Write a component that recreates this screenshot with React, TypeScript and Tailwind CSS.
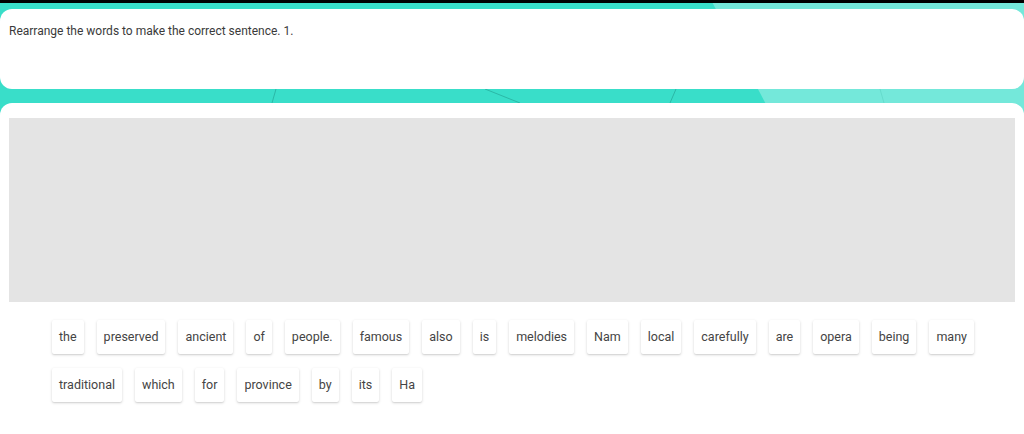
import React from 'react';

const row1 = ['the', 'preserved', 'ancient', 'of', 'people.', 'famous', 'also', 'is', 'melodies', 'Nam', 'local', 'carefully', 'are', 'opera', 'being', 'many'];
const row2 = ['traditional', 'which', 'for', 'province', 'by', 'its', 'Ha'];

const WordChip: React.FC<{ word: string }> = ({ word }) => (
  <div className="h-[34px] px-[7px] flex items-center bg-white rounded-[2px] text-[12.5px] text-[#444] shadow-[0_1px_3px_rgba(0,0,0,0.16),0_1px_1px_rgba(0,0,0,0.06)]">
    {word}
  </div>
);

export default function App() {
  return (
    <div
      className="relative w-[1024px] h-[434px] overflow-hidden bg-[#39dec9]"
      style={{ fontFamily: 'Roboto, "Liberation Sans", sans-serif' }}
    >
      {/* background decoration */}
      <svg className="absolute inset-0" width="1024" height="434" viewBox="0 0 1024 434">
        <polygon points="711,0 1024,0 1024,434 940,434" fill="#74e8da" />
        <path d="M485 89 L520 103" stroke="#2bb8a7" strokeWidth="1" fill="none" />
        <path d="M676 89 L670 103" stroke="#2bb8a7" strokeWidth="1" fill="none" />
        <path d="M276 89 L272 103" stroke="#2bb8a7" strokeWidth="1" fill="none" />
        <path d="M880 89 L884 103" stroke="#66dccd" strokeWidth="1" fill="none" />
      </svg>
      <div className="relative flex flex-col h-full">
        <div className="h-[3px] bg-black" />
        <div className="h-[6px]" />
        <div className="h-[80px] bg-white rounded-[12px] px-[9px] pt-[14px]">
          <p className="text-[12px] leading-[16px] text-[#3a3a3a]">Rearrange the words to make the correct sentence. 1.</p>
        </div>
        <div className="h-[14px]" />
        <div className="flex-1 bg-white rounded-t-[12px] pt-[15px]">
          <div className="mx-[9px] h-[184px] bg-[#e4e4e4]" />
          <div className="px-[52px] pt-[18px] flex flex-col gap-[14px]">
            <div className="flex gap-[13px]">
              {row1.map((w) => (
                <WordChip key={w} word={w} />
              ))}
            </div>
            <div className="flex gap-[13px]">
              {row2.map((w) => (
                <WordChip key={w} word={w} />
              ))}
            </div>
          </div>
        </div>
      </div>
    </div>
  );
}
